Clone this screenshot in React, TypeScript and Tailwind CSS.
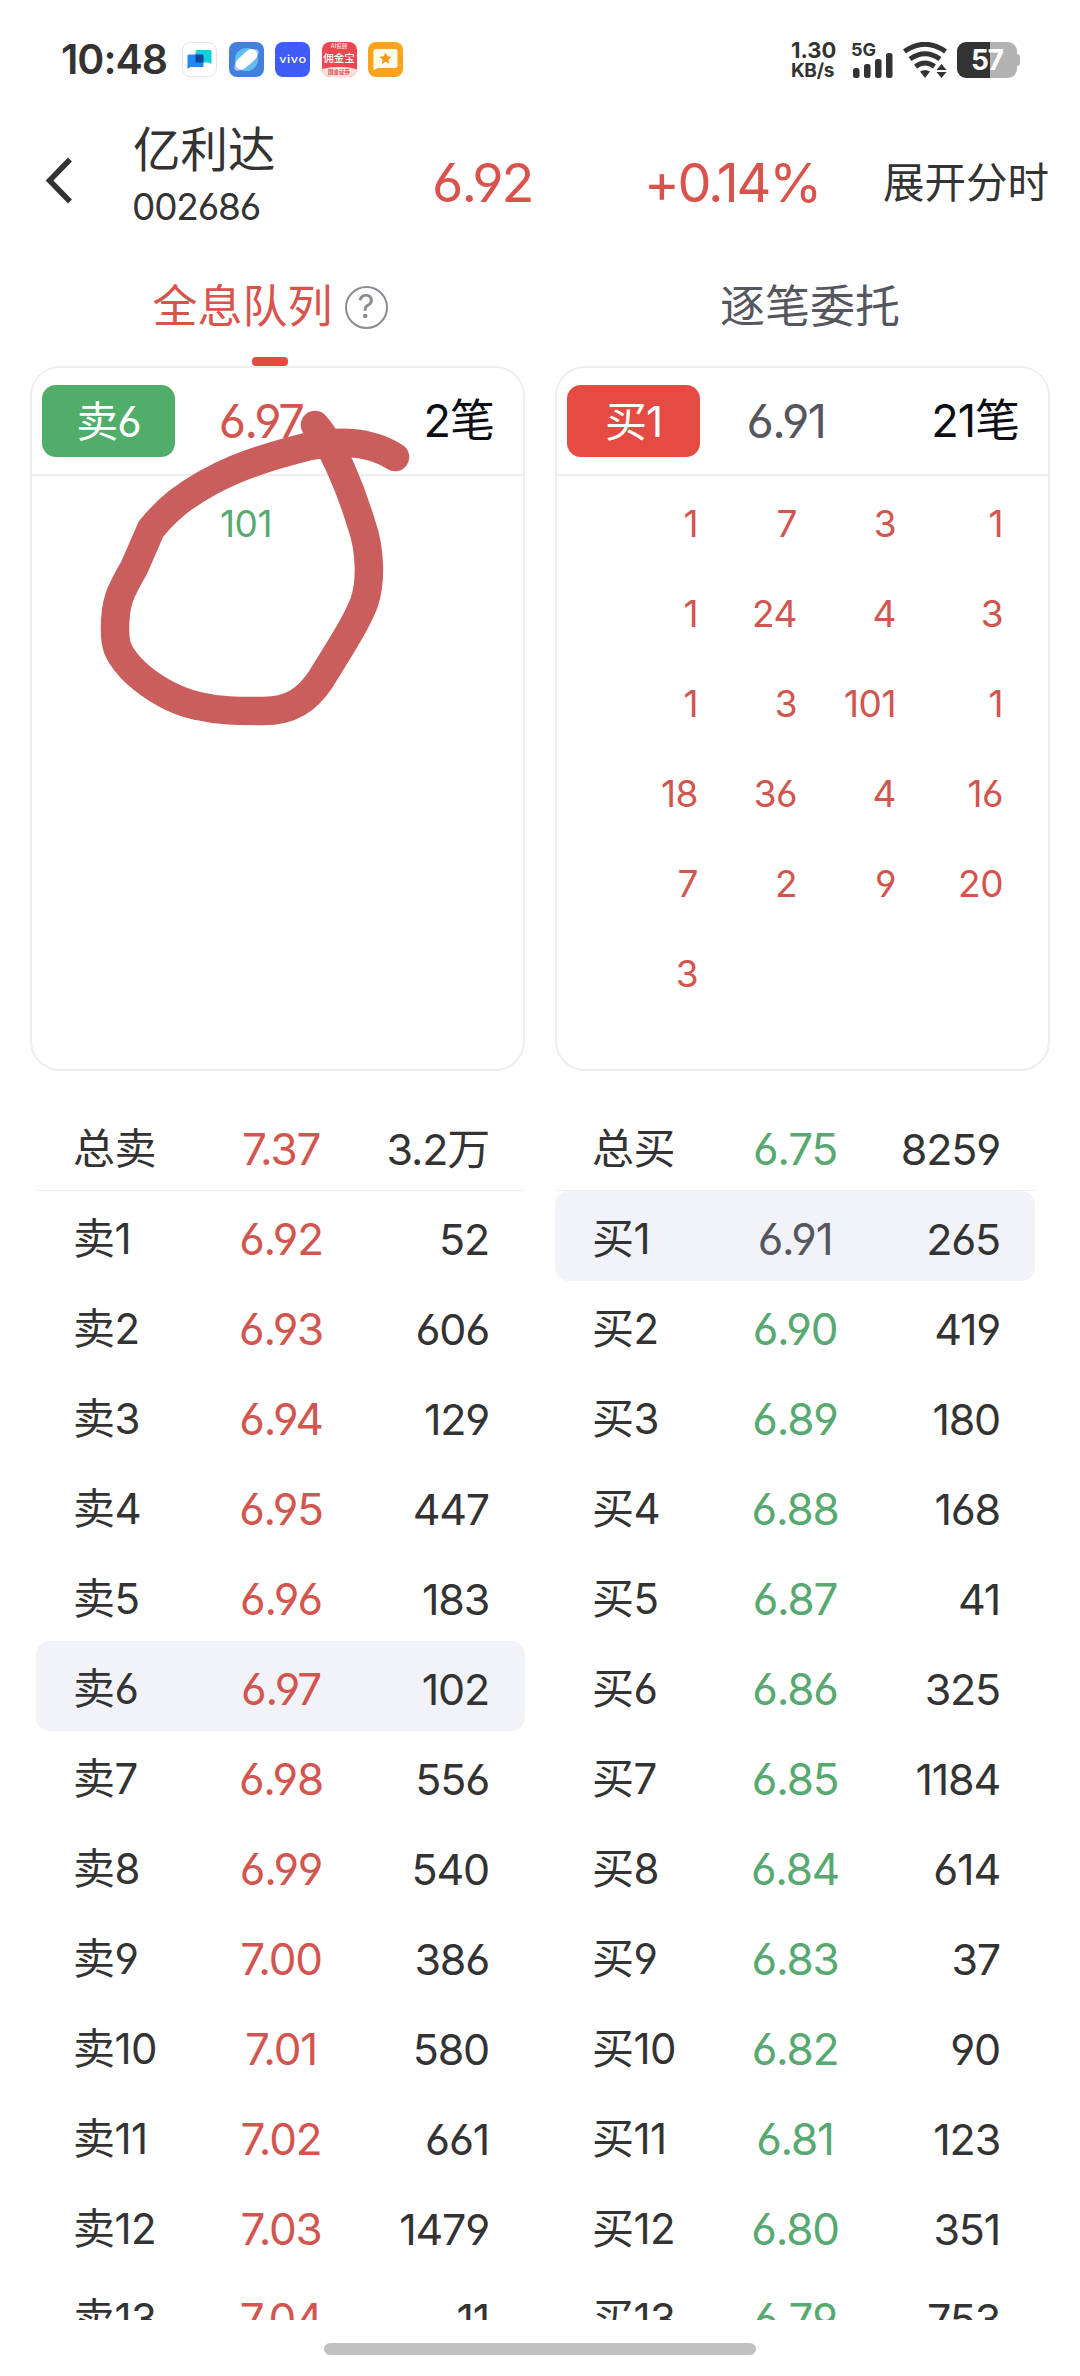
import clsx from "clsx";

type Level = { label: string; price: string; volume: string; active?: boolean };

interface BookProps {
  side: "sell" | "buy";
  rows: Level[];
}

interface QueueCardProps {
  label: string;
  price: string;
  count: string;
  badgeClass: string;
  priceClass: string;
  orderClass: string;
  orders: string[];
}

const sellRows: Level[] = [
  { label: "总卖", price: "7.37", volume: "3.2万" },
  { label: "卖1", price: "6.92", volume: "52" },
  { label: "卖2", price: "6.93", volume: "606" },
  { label: "卖3", price: "6.94", volume: "129" },
  { label: "卖4", price: "6.95", volume: "447" },
  { label: "卖5", price: "6.96", volume: "183" },
  { label: "卖6", price: "6.97", volume: "102", active: true },
  { label: "卖7", price: "6.98", volume: "556" },
  { label: "卖8", price: "6.99", volume: "540" },
  { label: "卖9", price: "7.00", volume: "386" },
  { label: "卖10", price: "7.01", volume: "580" },
  { label: "卖11", price: "7.02", volume: "661" },
  { label: "卖12", price: "7.03", volume: "1479" },
  { label: "卖13", price: "7.04", volume: "11" },
];

const buyRows: Level[] = [
  { label: "总买", price: "6.75", volume: "8259" },
  { label: "买1", price: "6.91", volume: "265", active: true },
  { label: "买2", price: "6.90", volume: "419" },
  { label: "买3", price: "6.89", volume: "180" },
  { label: "买4", price: "6.88", volume: "168" },
  { label: "买5", price: "6.87", volume: "41" },
  { label: "买6", price: "6.86", volume: "325" },
  { label: "买7", price: "6.85", volume: "1184" },
  { label: "买8", price: "6.84", volume: "614" },
  { label: "买9", price: "6.83", volume: "37" },
  { label: "买10", price: "6.82", volume: "90" },
  { label: "买11", price: "6.81", volume: "123" },
  { label: "买12", price: "6.80", volume: "351" },
  { label: "买13", price: "6.79", volume: "753" },
];

const buyOrders = ["1", "7", "3", "1", "1", "24", "4", "3", "1", "3", "101", "1", "18", "36", "4", "16", "7", "2", "9", "20", "3"];

const AppIcons = () => (
  <div className="flex gap-[11.5px]">
    <svg width="35" height="35" viewBox="0 0 35 35">
      <rect x="0.5" y="0.5" width="34" height="34" rx="8" fill="#fff" stroke="#e4e4e4" />
      <path d="M15 8h13q1.500 0 1.500 1.500v12.500l-3-1.500h-13v-11q0-1.500 1.500-1.500z" fill="#0bd3dc" />
      <path d="M7 12.500h13q1.500 0 1.500 1.500v11h-13l-3 2v-13q0-1.500 1.500-1.500z" fill="#2388f6" />
      <path d="M13.500 12.500h6.500q1.500 0 1.500 1.500v6.500h-8z" fill="#0a489e" />
    </svg>
    <svg width="35" height="35" viewBox="0 0 35 35">
      <rect width="35" height="35" rx="8" fill="#4380dc" />
      <circle cx="17.500" cy="17.500" r="11.500" fill="#62bdf5" />
      <ellipse cx="17.500" cy="18" rx="15" ry="6" fill="#a9c7f3" transform="rotate(-40 17.500 18)" />
      <rect x="5" y="11.500" width="25" height="11.500" rx="5.500" fill="#fff" transform="rotate(-42 17.500 17.500)" />
    </svg>
    <div className="flex h-[35px] w-[35px] items-center justify-center rounded-[8px] bg-[#405cf8] text-[11px] font-medium tracking-[0.5px] text-white">
      <span className="scale-x-115">vivo</span>
    </div>
    <div className="flex h-[35px] w-[35px] flex-col items-center justify-between overflow-hidden rounded-[8px] bg-[#ec4750] text-white">
      <span className="text-[5.500px] leading-[8px]">AI投顾</span>
      <span className="text-[10.500px] leading-[13px] font-medium whitespace-nowrap">佣金宝</span>
      <span className="w-[42px] rounded-t-[50%] bg-[#fbe3da] text-center text-[5.500px] leading-[10px] font-bold text-[#e2464c]">国金证券</span>
    </div>
    <svg width="35" height="35" viewBox="0 0 35 35">
      <rect width="35" height="35" rx="8" fill="#faa31b" />
      <path d="M8 7h19q2.500 0 2.500 2.500v14q0 2.500-2.500 2.500h-17.500l-4 2.500v-19q0-2.500 2.500-2.500z" fill="#fffbea" />
      <path d="M17.500 10.500l1.800 3.800 4.200.5-3.100 2.900.8 4.100-3.700-2-3.700 2 .8-4.100-3.100-2.900 4.200-.5z" fill="#f29a16" />
    </svg>
  </div>
);

const StatusBar = () => (
  <div className="flex h-[120px] pt-[42px] pr-[60px] pl-[61px] text-[#333]">
    <div className="w-[121px] text-[41px] leading-[35px] font-semibold tracking-[-1px]">10:48</div>
    <AppIcons />
    <div className="ml-auto flex">
      <div className="w-[60px] font-bold">
        <div className="text-[22px] leading-[17px]">1.30</div>
        <div className="mt-[3px] text-[19px] leading-[18px] tracking-[-0.3px]">KB/s</div>
      </div>
      <div className="w-[52px]">
        <div className="h-[15px] text-[18px] leading-[15px] font-bold">5G</div>
        <svg className="mt-[-4px] ml-[2px]" width="41" height="25" viewBox="0 0 41 25" fill="#333">
          <rect x="0" y="15" width="6.500" height="10" rx="2.500" />
          <rect x="11" y="11" width="6.500" height="14" rx="2.500" />
          <rect x="22" y="6" width="6.500" height="19" rx="2.500" />
          <rect x="33" y="0" width="6.500" height="25" rx="2.500" />
        </svg>
      </div>
      <svg width="44" height="36" viewBox="0 0 44 36" fill="none" stroke="#333" strokeWidth="5">
        <path d="M1.500 9.500Q22-5 42.500 9.500" />
        <path d="M7 17Q22 6.500 37 17" />
        <path d="M12.500 24.500Q22 17.500 31.500 24.500" />
        <path d="M17 29.500Q22 26.500 27 29.500L22 36z" fill="#333" stroke="none" />
        <path d="M38.500 22l5 6h-10zM38.500 36l5-6h-10z" fill="#333" stroke="none" />
      </svg>
      <div className="ml-[10px] flex h-[36px] items-center">
        <div className="flex h-[36px] w-[60px] items-center justify-center rounded-[9px] bg-linear-to-r from-[#333] from-55% to-[#b3b3b3] to-55% text-[28px] font-bold tracking-[-1px] text-white">57</div>
        <div className="h-[12px] w-[3px] rounded-r-[3px] bg-[#b3b3b3]" />
      </div>
    </div>
  </div>
);

const Header = () => (
  <div className="flex h-[126px] text-[#333]">
    <svg className="mt-[37px] ml-[45px]" width="28" height="47" viewBox="0 0 28 47" fill="none" stroke="#333" strokeWidth="5.500">
      <path d="M25 2.500L4.500 23.500L25 44.500" />
    </svg>
    <div className="ml-[60px] w-[299px]">
      <div className="h-[60px] text-[47.500px] leading-[60px]">亿利达</div>
      <div className="-ml-px text-[37px] leading-[53px] tracking-[-1.2px]">002686</div>
    </div>
    <div className="w-[212px] text-[54px] leading-[126px] tracking-[-2px] text-[#d9534c]">6.92</div>
    <div className="w-[239px] text-[54px] leading-[126px] tracking-[-2.2px] text-[#d9534c]">+0.14%</div>
    <div className="text-[41.500px] leading-[126px]">展开分时</div>
  </div>
);

const Tabs = () => (
  <div className="flex h-[120px]">
    <div className="flex w-[540px] flex-col items-center">
      <div className="flex h-[111px] items-center gap-[12px] pt-[11px]">
        <span className="text-[45px] leading-[60px] text-[#d9534c]">全息队列</span>
        <span className="flex h-[43px] w-[43px] items-center justify-center rounded-full border-2 border-[#8b8c92] text-[33px] text-[#8b8c92]">?</span>
      </div>
      <div className="h-[9px] w-[36px] rounded-[4px] bg-[#e54b43]" />
    </div>
    <div className="flex h-[111px] w-[540px] items-center justify-center pt-[11px] text-[45px] text-[#55565e]">逐笔委托</div>
  </div>
);

const QueueCard = (props: QueueCardProps) => (
  <div className="h-[705px] w-[495px] rounded-[30px] border-2 border-[#eee]">
    {/* Card header */}
    <div className="flex h-[108px] items-center border-b-2 border-[#eee] pr-[29px] pl-[10px]">
      <div className={clsx("flex h-[72px] w-[133px] items-center justify-center rounded-[14px] text-[42px] tracking-[-1px] text-white", props.badgeClass)}>{props.label}</div>
      <div className={clsx("w-[172px] text-center text-[47px] tracking-[-1.500px]", props.priceClass)}>{props.price}</div>
      <div className="flex-1 text-right text-[45px] tracking-[-1px] whitespace-nowrap text-[#0d0e14]">{props.count}</div>
    </div>
    {/* Orders */}
    <div className={clsx("grid grid-cols-[141px_99px_99px_107px] text-right text-[37px] leading-[95px] tracking-[-0.500px]", props.orderClass)}>
      {props.orders.map((order, i) => (
        <div key={i} className="h-[90px]">
          {order}
        </div>
      ))}
    </div>
  </div>
);

// Circle drawn by hand round the 101-lot order
const Marker = () => (
  <svg className="absolute top-0 left-0" width="495" height="400" viewBox="30 366 495 400" fill="none" stroke="#c95e5d" strokeWidth="28.500" strokeLinecap="round" strokeLinejoin="round">
    <path d="M315 425C333 445 351 490 361 523C371 551 371 583 364 603C356 623 345 640 321 679C307 700 291 711 263 711C237 711 219 711 198 706C169 700 143 681 130 667C117 652 115 645 115 629C115 602 120 592 134 568L151 529Q163 514 178 502C214 475 250 461 310 446C346 439 373 443 395 457" />
  </svg>
);

const Book = ({ side, rows }: BookProps) => (
  <div className={side === "sell" ? "w-[489px]" : "w-[480px]"}>
    {rows.map((row, i) => (
      <div
        key={row.label}
        className={clsx(
          "flex h-[90px] text-[43px] leading-[96px] text-[#333]",
          side === "sell" ? "pr-[36px] pl-[37px]" : "pr-[35px] pl-[37px]",
          i === 0 && "border-b border-[#eee]",
          row.active && "rounded-[14px] bg-[#f2f3f8]"
        )}
      >
        <div className={clsx("text-[42px] tracking-[-0.5px]", side === "sell" ? "w-[133px]" : "w-[128px]")}>{row.label}</div>
        <div className={clsx("w-[150px] text-center text-[44px] tracking-[-1.200px]", side === "sell" ? "text-[#d2554f]" : row.active ? "text-[#55565e]" : "text-[#57a971]")}>{row.price}</div>
        <div className="flex-1 text-right tracking-[-1.200px]">{row.volume}</div>
      </div>
    ))}
  </div>
);

const App = () => {
  return (
    <div className="flex h-[2376px] w-[1080px] flex-col overflow-hidden bg-white font-['Inter','Noto_Sans_CJK_SC',sans-serif] [font-feature-settings:'cv03','cv04']">
      <StatusBar />
      <Header />
      <Tabs />
      <div className="relative flex gap-[30px] pl-[30px]">
        <QueueCard label="卖6" price="6.97" count="2笔" badgeClass="bg-[#50ad6a]" priceClass="text-[#d2554f]" orderClass="text-[#57a971]" orders={["", "101"]} />
        <QueueCard label="买1" price="6.91" count="21笔" badgeClass="bg-[#e54b43]" priceClass="text-[#55565e]" orderClass="text-[#d2554f]" orders={buyOrders} />
        <div className="absolute top-0 left-[30px]">
          <Marker />
        </div>
      </div>
      <div className="mt-[30px] flex h-[1219px] shrink-0 gap-[30px] overflow-hidden pl-[36px]">
        <Book side="sell" rows={sellRows} />
        <Book side="buy" rows={buyRows} />
      </div>
      <div className="mt-[23px] h-[12px] w-[432px] shrink-0 self-center rounded-full bg-[#c1c1c1]" />
    </div>
  );
};

export default App;
